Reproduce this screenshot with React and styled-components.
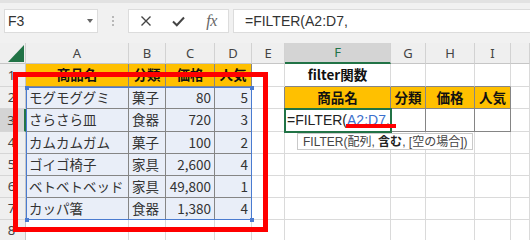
import React from 'react';
import styled, { createGlobalStyle } from 'styled-components';

const Global = createGlobalStyle`
  html, body { margin: 0; padding: 0; background: #fff; }
  body { width: 530px; height: 240px; overflow: hidden; font-family: "Noto Sans CJK JP", sans-serif; }
`;

const COLS = [26, 103, 37, 49, 37, 33, 106, 35, 49, 36, 19];
const ROWS = [21, 23, 22, 23, 22, 22, 22, 22, 22];
const COL_KEYS = ['A', 'B', 'C', 'D', 'E', 'F', 'G', 'H', 'I', 'J'];
const HEADS = ['商品名', '分類', '価格', '人気'];
const DATA = [
  ['モグモググミ', '菓子', '80', '5'],
  ['さらさら皿', '食器', '720', '3'],
  ['カムカムガム', '菓子', '100', '2'],
  ['ゴイゴ椅子', '家具', '2,600', '4'],
  ['ベトベトベッド', '家具', '49,800', '1'],
  ['カッパ箸', '食器', '1,380', '4'],
];

const GRID = '#dadada';
const DARK = '#858585';
const GREEN = '#217346';

const Frame = styled.div`
  position: relative;
  width: 530px;
  height: 240px;
  overflow: hidden;
  background: #fff;
`;

const TopBar = styled.div`
  box-sizing: border-box;
  height: 43px;
  background: #f1f1f1;
  border-top: 3px solid #e2e2e2;
  display: flex;
  align-items: flex-start;
  padding: 6px 0 0 4px;
`;

const Box = styled.div`
  box-sizing: border-box;
  height: 24px;
  background: #fff;
  border: 1px solid #dcdcdc;
  display: flex;
  align-items: center;
  font: 400 14px/1 "Liberation Sans", Arial, sans-serif;
  color: #333;
`;

const NameBox = styled(Box)`
  width: 94px;
  justify-content: space-between;
  padding: 0 4px 0 3px;
`;

const DropArrow = styled.span`
  width: 0;
  height: 0;
  border-left: 3px solid transparent;
  border-right: 3px solid transparent;
  border-top: 4px solid #666;
`;

const Grip = styled.div`
  width: 30px;
  height: 24px;
  display: flex;
  flex-direction: column;
  align-items: center;
  justify-content: center;
  gap: 2px;
  & > i {
    display: block;
    width: 2px;
    height: 2px;
    background: #b8b8b8;
  }
`;

const FxButtons = styled(Box)`
  width: 101px;
  padding: 0;
`;

const IconSlot = styled.div`
  flex: 1;
  height: 100%;
  display: flex;
  align-items: center;
  justify-content: center;
  color: #444;
`;

const FxText = styled.span`
  font: italic 400 16px/1 "Liberation Serif", "Times New Roman", serif;
  color: #666;
  letter-spacing: -0.5px;
`;

const FormulaInput = styled(Box)`
  flex: 1;
  margin-left: 4px;
  padding-left: 11px;
  border-right: none;
`;

const Sheet = styled.div`
  display: grid;
  grid-template-columns: ${COLS.map((c) => c + 'px').join(' ')};
  grid-template-rows: ${ROWS.map((r) => r + 'px').join(' ')};
`;

const HeadBase = styled.div`
  box-sizing: border-box;
  display: flex;
  align-items: center;
  justify-content: center;
  background: #efefef;
  font: 400 13px/1 "Noto Sans", "Liberation Sans", sans-serif;
  color: #444;
`;

const Corner = styled(HeadBase)`
  border-right: 1px solid #cfcfcf;
  border-bottom: 1px solid #c6c6c6;
  align-items: flex-end;
  justify-content: flex-end;
  padding: 0 1px 1px 0;
`;

const ColHead = styled(HeadBase)`
  border-right: 1px solid #d2d2d2;
  border-bottom: ${(p) => (p.$selected ? `2px solid ${GREEN}` : '1px solid #c6c6c6')};
  background: ${(p) => (p.$selected ? '#d4d4d4' : '#efefef')};
  color: ${(p) => (p.$selected ? GREEN : '#444')};
`;

const RowHead = styled(HeadBase)`
  border-bottom: 1px solid #d6d6d6;
  border-right: ${(p) => (p.$selected ? `2px solid ${GREEN}` : '1px solid #c6c6c6')};
  background: ${(p) => (p.$selected ? '#d4d4d4' : '#efefef')};
  padding-right: 2px;
`;

const Cell = styled.div`
  position: relative;
  box-sizing: border-box;
  display: flex;
  align-items: center;
  justify-content: ${(p) =>
    p.$align === 'right' ? 'flex-end' : p.$align === 'center' ? 'center' : 'flex-start'};
  padding: ${(p) => (p.$align === 'right' ? '0 3px 0 0' : p.$align === 'center' ? '0' : '0 0 0 3px')};
  border-right: 1px solid ${(p) => (p.$rDark ? DARK : GRID)};
  border-bottom: 1px solid ${(p) => (p.$bDark ? DARK : GRID)};
  background: ${(p) => p.$fill || '#fff'};
  font: ${(p) => (p.$bold ? 700 : 400)} 13.5px/1 "Noto Sans CJK JP", sans-serif;
  color: ${(p) => (p.$bold ? '#111' : '#333')};
  white-space: nowrap;
  overflow: visible;
`;

const FormulaCell = styled(Cell)`
  outline: 2px solid ${GREEN};
  outline-offset: -1px;
  z-index: 2;
  padding-left: 2px;
  font: 400 14px/1 "Liberation Sans", Arial, sans-serif;
  color: #222;
`;

const RefText = styled.span`
  color: #3b6fcc;
`;

const RangeBox = styled.div`
  position: absolute;
  left: 26px;
  top: 87px;
  width: 226px;
  height: 133px;
  box-sizing: border-box;
  border: 1px solid #4a7bd0;
  pointer-events: none;
`;

const Handle = styled.span`
  position: absolute;
  width: 4px;
  height: 4px;
  background: #4a7bd0;
  ${(p) => (p.$top ? 'top: -2px;' : 'bottom: -3px;')}
  ${(p) => (p.$left ? 'left: -2px;' : 'right: -3px;')}
`;

const RedBox = styled.div`
  position: absolute;
  left: 13px;
  top: 72px;
  width: 255px;
  height: 160px;
  box-sizing: border-box;
  border: 5px solid #ff0000;
  pointer-events: none;
`;

const RedUnderline = styled.div`
  position: absolute;
  left: 346px;
  top: 124px;
  width: 50px;
  height: 4px;
  background: #ff0000;
  z-index: 3;
`;

const Tip = styled.div`
  position: absolute;
  left: 297px;
  top: 133px;
  height: 17px;
  box-sizing: border-box;
  padding: 0 5px;
  display: flex;
  align-items: center;
  background: #fff;
  border: 1px solid #c9c9c9;
  font: 400 12px/1 "Liberation Sans", "Noto Sans CJK JP", sans-serif;
  color: #444;
  white-space: nowrap;
  z-index: 4;
  & b {
    font-weight: 700;
    color: #222;
  }
`;

function cellSpec(r, ci) {
  const inT1 = r >= 1 && r <= 7 && ci <= 3;
  const inT2 = r >= 2 && r <= 3 && ci >= 5 && ci <= 8;
  const spec = {
    rDark: inT1 || inT2 || (ci === 4 && (r === 2 || r === 3)),
    bDark: inT1 || inT2 || (r === 1 && ci >= 5 && ci <= 8),
    text: '',
    align: 'left',
  };
  if (r === 1 && ci <= 3) {
    Object.assign(spec, { text: HEADS[ci], bold: true, align: 'center', fill: '#ffc000' });
  } else if (r === 2 && ci >= 5 && ci <= 8) {
    Object.assign(spec, { text: HEADS[ci - 5], bold: true, align: 'center', fill: '#ffc000' });
  } else if (r >= 2 && r <= 7 && ci <= 3) {
    Object.assign(spec, { text: DATA[r - 2][ci], align: ci >= 2 ? 'right' : 'left', fill: '#e9eef8' });
  } else if (r === 1 && ci === 5) {
    Object.assign(spec, { text: 'filter関数', bold: true, align: 'center' });
  } else if (r === 3 && ci === 5) {
    spec.formula = true;
  }
  return spec;
}

function CrossIcon() {
  return (
    <svg width="12" height="12" viewBox="0 0 12 12">
      <path d="M1.5 1.5 L10.5 10.5 M10.5 1.5 L1.5 10.5" stroke="#444" strokeWidth="1.4" fill="none" />
    </svg>
  );
}

function CheckIcon() {
  return (
    <svg width="13" height="11" viewBox="0 0 13 11">
      <path d="M1 5.5 L4.8 9.2 L12 1.5" stroke="#444" strokeWidth="2" fill="none" />
    </svg>
  );
}

export default function App() {
  const cells = [];
  cells.push(
    <Corner key="corner">
      <svg width="16" height="17" viewBox="0 0 16 17">
        <polygon points="16,0 16,17 0,17" fill={GREEN} />
      </svg>
    </Corner>
  );
  COL_KEYS.forEach((k) => {
    cells.push(
      <ColHead key={'h' + k} $selected={k === 'F'}>
        {k === 'J' ? '' : k}
      </ColHead>
    );
  });
  for (let r = 1; r <= 8; r++) {
    cells.push(
      <RowHead key={'r' + r} $selected={r === 3}>
        {r}
      </RowHead>
    );
    COL_KEYS.forEach((k, ci) => {
      const s = cellSpec(r, ci);
      if (s.formula) {
        cells.push(
          <FormulaCell key={k + r} $rDark={s.rDark} $bDark={s.bDark}>
            =FILTER(<RefText>A2:D7</RefText>,
          </FormulaCell>
        );
      } else {
        cells.push(
          <Cell
            key={k + r}
            $rDark={s.rDark}
            $bDark={s.bDark}
            $align={s.align}
            $bold={s.bold}
            $fill={s.fill}
          >
            {s.text}
          </Cell>
        );
      }
    });
  }

  return (
    <>
      <Global />
      <Frame>
        <TopBar>
          <NameBox>
            <span>F3</span>
            <DropArrow />
          </NameBox>
          <Grip>
            <i />
            <i />
            <i />
          </Grip>
          <FxButtons>
            <IconSlot>
              <CrossIcon />
            </IconSlot>
            <IconSlot>
              <CheckIcon />
            </IconSlot>
            <IconSlot>
              <FxText>fx</FxText>
            </IconSlot>
          </FxButtons>
          <FormulaInput>=FILTER(A2:D7,</FormulaInput>
        </TopBar>
        <Sheet>{cells}</Sheet>
        <RangeBox>
          <Handle $top $left />
          <Handle $top />
          <Handle $left />
          <Handle />
        </RangeBox>
        <RedBox />
        <RedUnderline />
        <Tip>
          FILTER(配列, <b>&nbsp;含む</b>, [空の場合])
        </Tip>
      </Frame>
    </>
  );
}
